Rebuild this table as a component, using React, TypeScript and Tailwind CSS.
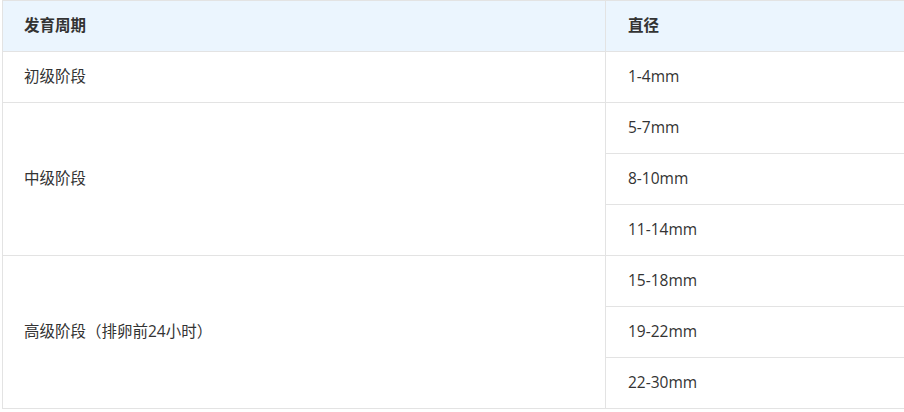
const rows: { stage: string; sizes: string[] }[] = [
  { stage: '初级阶段', sizes: ['1-4mm'] },
  { stage: '中级阶段', sizes: ['5-7mm', '8-10mm', '11-14mm'] },
  { stage: '高级阶段（排卵前24小时）', sizes: ['15-18mm', '19-22mm', '22-30mm'] },
];

export default function App() {
  return (
    <div
      className="w-[904px] h-[412px] overflow-hidden bg-white pl-[2px] text-[15.5px] text-[#333]"
      style={{ fontFamily: '"Open Sans", "Noto Sans CJK SC", sans-serif' }}
    >
      <table className="w-[960px] border-collapse table-fixed">
        <colgroup>
          <col className="w-[603px]" />
          <col />
        </colgroup>
        <thead>
          <tr className="h-[51px] bg-[#ebf5fe]">
            <th className="border border-[#e3e3e3] pl-[21px] text-left font-bold">发育周期</th>
            <th className="border border-[#e3e3e3] pl-[22px] text-left font-bold">直径</th>
          </tr>
        </thead>
        <tbody>
          {rows.flatMap((r) =>
            r.sizes.map((s, i) => (
              <tr key={r.stage + s} className="h-[51px]">
                {i === 0 && (
                  <td rowSpan={r.sizes.length} className="border border-[#e3e3e3] pl-[21px] align-middle">
                    {r.stage}
                  </td>
                )}
                <td className="border border-[#e3e3e3] pl-[22px] align-middle">{s}</td>
              </tr>
            ))
          )}
        </tbody>
      </table>
    </div>
  );
}
